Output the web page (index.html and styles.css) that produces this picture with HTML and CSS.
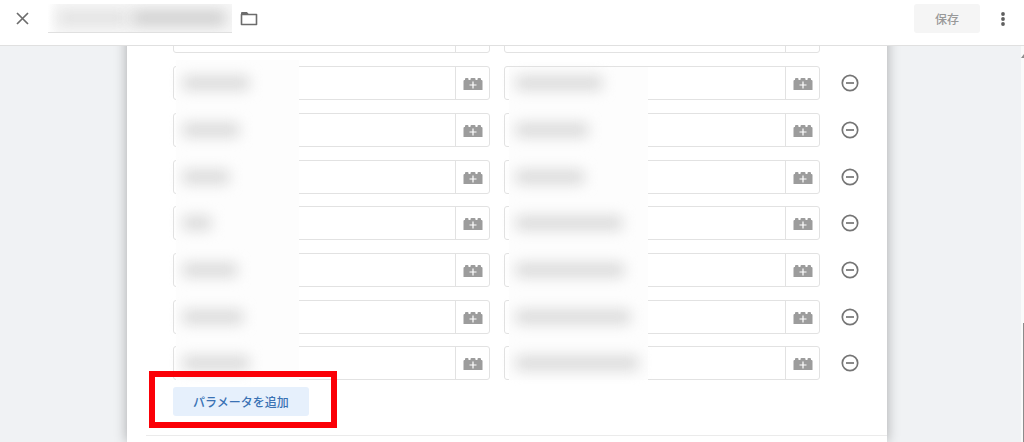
FILE: index.html
```html
<!DOCTYPE html>
<html lang="ja">
<head>
  <meta charset="UTF-8" />
  <meta name="viewport" content="width=device-width, initial-scale=1.0"/>
  <title>タグの設定</title>
  <link rel="stylesheet" href="styles.css">
</head>
<body>

  <header class="top-bar">
    <button class="icon-btn" aria-label="閉じる">
      <svg width="13" height="13" viewBox="0 0 13 13"><path d="M1 1l11 11M12 1L1 12" fill="none" stroke="#6c6c6c" stroke-width="1.700"/></svg>
    </button>
    <div class="title-field">
      <input class="title-input" type="text" aria-label="タグ名">
      <span class="title-mask"><i></i><i></i></span>
    </div>
    <button class="icon-btn" aria-label="フォルダ">
      <svg width="18" height="15" viewBox="0 0 18 15"><path d="M1.500 3.500h15v10h-15z" fill="none" stroke="#6c6c6c" stroke-width="1.600" stroke-linejoin="round"/><path d="M1 4V2q0-1 1-1h5l2 2.500V4z" fill="#6c6c6c"/></svg>
    </button>
    <button class="save-btn" disabled>保存</button>
    <button class="icon-btn" aria-label="その他">
      <svg width="6" height="16" viewBox="0 0 6 16" fill="#5f5f5f"><circle cx="3" cy="3" r="1.900"/><circle cx="3" cy="8" r="1.900"/><circle cx="3" cy="13" r="1.900"/></svg>
    </button>
  </header>

  <main>
    <div class="card">
      <section class="params">
        <div id="paramRows"></div>
        <div class="add-area">
          <button class="add-btn">パラメータを追加</button>
          <span class="highlight"></span>
        </div>
      </section>
    </div>
    <div class="scroll-rail">
      <svg class="scroll-arrow" width="3" height="4" viewBox="0 0 3 4"><path d="M0 4L3 0v4z" fill="#8c8c8c"/></svg>
      <span class="scroll-thumb"></span>
    </div>
  </main>

  <script>
    // widths of the hidden name / value in each row
    const rows = [
      [0, 0],
      [66, 86],
      [56, 72],
      [46, 68],
      [28, 106],
      [54, 108],
      [60, 114],
      [66, 122]
    ];

    const brick = `<svg width="20" height="14" viewBox="0 0 20 14"><path d="M.5 4q0-1 1-1H2V2q0-1 1-1h1.500q1 0 1 1v1h2V2q0-1 1-1h3q1 0 1 1v1h2V2q0-1 1-1H17q1 0 1 1v1h.5q1 0 1 1v9H.5z" fill="#9c9c9c"/><path d="M10 4.500v7M6.500 8h7" stroke="#fff" stroke-width="1.200"/></svg>`;
    const minus = `<svg width="18" height="18" viewBox="0 0 18 18" fill="none" stroke="#757575" stroke-width="1.700"><circle cx="9" cy="9" r="7.700"/><path d="M5 9h8"/></svg>`;

    function field(label, kind, width) {
      const mask = width ? `<span class="mask mask-${kind}"><i style="width:${width}px"></i></span>` : "";
      return `<div class="field">
        <input type="text" aria-label="${label}">
        <button class="picker-btn" aria-label="変数を選択">${brick}</button>
        ${mask}
      </div>`;
    }

    document.getElementById("paramRows").innerHTML = rows.map(([name, value], i) =>
      `<div class="param-row">
        ${field("パラメータ名 " + (i + 1), "name", name)}
        ${field("値 " + (i + 1), "value", value)}
        <button class="icon-btn" aria-label="削除">${minus}</button>
      </div>`
    ).join("");
  </script>
</body>
</html>
```
FILE: styles.css
```css
* { box-sizing: border-box; }

body {
  margin: 0;
  height: 100vh;
  display: flex;
  flex-direction: column;
  overflow: hidden;
  font-family: "Noto Sans CJK JP", "Noto Sans", sans-serif;
  background-color: #f0f2f4;
  color: #333;
}

button {
  font-family: inherit;
  cursor: pointer;
}

svg { display: block; }

.icon-btn {
  border: none;
  background: none;
  padding: 0;
}

/* header */
.top-bar {
  position: relative;
  z-index: 2;
  flex: none;
  display: flex;
  align-items: center;
  padding: 4px 18px 12px 16px;
  background: #fff;
  border-bottom: 1px solid #e0e0e0;
}

.title-field {
  position: relative;
  width: 184px;
  margin: 0 8px 0 19px;
}

.title-input {
  display: block;
  width: 100%;
  height: 29px;
  border: none;
  border-bottom: 1px solid #e0e0e0;
  outline: none;
}

.title-mask {
  position: absolute;
  inset: 0 0 1px;
  overflow: hidden;
  background: linear-gradient(90deg, #fff, #f8f8f8 10px);
}

.title-mask i {
  position: absolute;
  top: 6px;
  left: 10px;
  width: 70px;
  height: 16px;
  background: #e2e2e2;
  filter: blur(7px);
}

.title-mask i + i {
  left: 84px;
  width: 94px;
  background: #d0d0d0;
}

.save-btn {
  height: 29px;
  margin-left: auto;
  margin-right: 20px;
  padding: 0 21px;
  border: none;
  border-radius: 3px;
  background: #f5f5f5;
  color: #999;
  font-size: 12px;
  font-weight: 500;
}

/* content */
main {
  position: relative;
  flex: 1;
  min-height: 0;
  display: flex;
  justify-content: center;
  padding-right: 10px;
}

.card {
  width: 100%;
  max-width: 760px;
  margin-top: -27px;
  background: #fff;
  box-shadow: 0 0 12px rgba(0, 0, 0, 0.3);
}

.params {
  margin-left: 19px;
  padding: 0 28px 19px 27px;
  border-bottom: 1px solid #ebebeb;
}

.param-row {
  display: grid;
  grid-template-columns: 317px minmax(0, 1fr) auto;
  align-items: center;
  margin-bottom: 13px;
}

.param-row:nth-child(3n+4) {
  margin-bottom: 12px;
}

.param-row:last-child {
  margin-bottom: 7px;
}

.field {
  position: relative;
  display: flex;
  height: 34px;
  border: 1px solid #e2e2e2;
  border-radius: 3px;
}

.field + .field {
  margin-left: 14px;
  margin-right: 21px;
}

.field input {
  flex: 1;
  min-width: 0;
  border: none;
  outline: none;
  background: none;
}

.picker-btn {
  width: 34px;
  display: flex;
  align-items: center;
  justify-content: center;
  padding: 2px 0 0;
  border: none;
  border-left: 1px solid #e2e2e2;
  background: none;
}

/* blurred-out contents */
.mask {
  position: absolute;
  top: -7px;
  bottom: -8px;
  left: 2px;
  width: 123px;
  background: #fdfdfd;
}

.mask-value {
  left: 4px;
  width: 139px;
}

.param-row:nth-child(2) .mask-value { top: 0; }

.param-row:last-child .mask { bottom: -1px; }

.mask i {
  position: absolute;
  bottom: 17px;
  left: 7px;
  height: 14px;
  background: #d9d9d9;
  filter: blur(7px);
}

.param-row:last-child .mask i { bottom: 10px; }

.add-area {
  position: relative;
  display: inline-block;
  vertical-align: top;
}

.add-btn {
  display: block;
  height: 29px;
  padding: 0 20px;
  border: none;
  border-radius: 3px;
  background: #e6f0fc;
  color: #3a72b4;
  font-size: 12px;
  font-weight: 500;
}

.highlight {
  position: absolute;
  top: -16px;
  bottom: -12px;
  left: -24px;
  right: -28px;
  border: 6px solid #fb0007;
  pointer-events: none;
}

.scroll-rail {
  position: absolute;
  top: 0;
  right: 0;
  bottom: 0;
  width: 3px;
  background: #fafafa;
}

.scroll-arrow {
  margin-top: 8px;
}

.scroll-thumb {
  position: absolute;
  top: 70%;
  bottom: 0;
  right: 0;
  width: 1px;
  background: #8c8c8c;
}
```
